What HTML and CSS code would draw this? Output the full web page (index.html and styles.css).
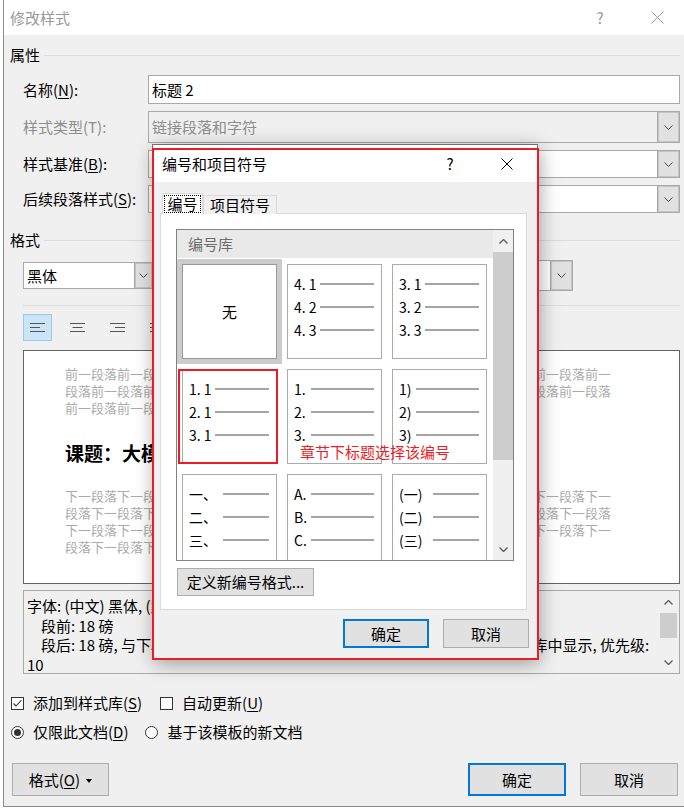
FILE: index.html
```html
<!DOCTYPE html>
<html lang="zh-CN">
<head>
    <meta charset="UTF-8">
    <title>修改样式</title>
    <link rel="stylesheet" href="styles.css">
</head>
<body>

<div class="window">
    <div class="titlebar">
        <span class="title">修改样式</span>
        <span class="tb-btn help">?</span>
        <span class="tb-btn close">
            <svg width="13" height="13" viewBox="0 0 13 13"><path d="M0.5 0.5 L12.5 12.5 M12.5 0.5 L0.5 12.5" stroke="#999" stroke-width="1" fill="none"/></svg>
        </span>
    </div>

    <div class="content">
        <div class="group-head">属性</div>
        <div class="props">
            <label>名称(<u>N</u>):</label>
            <div class="field">标题 2</div>

            <label class="disabled">样式类型(T):</label>
            <div class="field combo disabled">
                <span>链接段落和字符</span>
                <span class="drop"><svg width="9" height="5" viewBox="0 0 9 5"><path d="M0.5 0.5 L4.5 4.5 L8.5 0.5" stroke="#444" fill="none"/></svg></span>
            </div>

            <label>样式基准(<u>B</u>):</label>
            <div class="field combo">
                <span>↵ 正文</span>
                <span class="drop"><svg width="9" height="5" viewBox="0 0 9 5"><path d="M0.5 0.5 L4.5 4.5 L8.5 0.5" stroke="#444" fill="none"/></svg></span>
            </div>

            <label>后续段落样式(<u>S</u>):</label>
            <div class="field combo">
                <span>↵ 正文</span>
                <span class="drop"><svg width="9" height="5" viewBox="0 0 9 5"><path d="M0.5 0.5 L4.5 4.5 L8.5 0.5" stroke="#444" fill="none"/></svg></span>
            </div>
        </div>

        <div class="group-head second">格式</div>
        <div class="font-row">
            <div class="field combo font-combo">
                <span>黑体</span>
                <span class="drop"><svg width="9" height="5" viewBox="0 0 9 5"><path d="M0.5 0.5 L4.5 4.5 L8.5 0.5" stroke="#444" fill="none"/></svg></span>
            </div>
            <div class="field combo lang-combo">
                <span>中文</span>
                <span class="drop"><svg width="9" height="5" viewBox="0 0 9 5"><path d="M0.5 0.5 L4.5 4.5 L8.5 0.5" stroke="#444" fill="none"/></svg></span>
            </div>
        </div>
        <div class="sep"></div>

        <div class="align-row">
            <span class="align-btn on">
                <svg width="15" height="11" viewBox="0 0 15 11"><path d="M0 1.5 H15 M0 5.5 H10 M0 9.5 H15" stroke="#555" fill="none"/></svg>
            </span>
            <span class="align-btn">
                <svg width="15" height="11" viewBox="0 0 15 11"><path d="M0 1.5 H15 M2.5 5.5 H12.5 M0 9.5 H15" stroke="#555" fill="none"/></svg>
            </span>
            <span class="align-btn">
                <svg width="15" height="11" viewBox="0 0 15 11"><path d="M0 1.5 H15 M5 5.5 H15 M0 9.5 H15" stroke="#555" fill="none"/></svg>
            </span>
            <span class="align-btn">
                <svg width="15" height="11" viewBox="0 0 15 11"><path d="M0 1.5 H15 M0 5.5 H15 M0 9.5 H15" stroke="#555" fill="none"/></svg>
            </span>
        </div>

        <div class="preview">
            <div class="pv-line">前一段落前一段落前一段落前一段落前一段落前一段落前一段落前一段落前一段落前一段落前一</div>
            <div class="pv-line">段落前一段落前一段落前一段落前一段落前一段落前一段落前一段落前一段落前一段落前一段落</div>
            <div class="pv-line">前一段落前一段落前一段落前一段落前一段落</div>
            <div class="pv-head">课题：大模型应用研究</div>
            <div class="pv-line next">下一段落下一段落下一段落下一段落下一段落下一段落下一段落下一段落下一段落下一段落下一</div>
            <div class="pv-line">段落下一段落下一段落下一段落下一段落下一段落下一段落下一段落下一段落下一段落下一段落</div>
            <div class="pv-line">下一段落下一段落下一段落下一段落下一段落下一段落下一段落下一段落下一段落下一段落下一</div>
            <div class="pv-line">段落下一段落下一段落下一段落下一段落下一</div>
        </div>

        <div class="desc">
            <div class="desc-text">
                <div>字体: (中文) 黑体, (默认) +标题, 三号, 加粗, 段落间距</div>
                <div class="indent">段前: 18 磅</div>
                <div class="indent">段后: 18 磅, 与下段同页, <span class="fill">段中不分页, 2 级, 样式: 链接, 在样式</span>库中显示, 优先级:</div>
                <div>10</div>
            </div>
            <div class="scroll">
                <span class="sb-arrow"><svg width="9" height="5" viewBox="0 0 9 5"><path d="M0.5 4.5 L4.5 0.5 L8.5 4.5" stroke="#606060" stroke-width="1.4" fill="none"/></svg></span>
                <span class="sb-thumb small"></span>
                <span class="sb-track"></span>
                <span class="sb-arrow"><svg width="9" height="5" viewBox="0 0 9 5"><path d="M0.5 0.5 L4.5 4.5 L8.5 0.5" stroke="#606060" stroke-width="1.4" fill="none"/></svg></span>
            </div>
        </div>

        <div class="checks">
            <span class="opt"><span class="checkbox"><svg width="11" height="11" viewBox="0 0 11 11"><path d="M1.5 5.5 L4 8 L9.5 2" stroke="#333" stroke-width="1.1" fill="none"/></svg></span><span>添加到样式库(<u>S</u>)</span></span>
            <span class="opt"><span class="checkbox"></span><span>自动更新(<u>U</u>)</span></span>
        </div>
        <div class="checks radios">
            <span class="opt"><span class="radio on"></span><span>仅限此文档(<u>D</u>)</span></span>
            <span class="opt"><span class="radio"></span><span>基于该模板的新文档</span></span>
        </div>

        <div class="buttons">
            <button class="btn format-btn">格式(<u>O</u>) <span class="caret"></span></button>
            <button class="btn primary">确定</button>
            <button class="btn">取消</button>
        </div>
    </div>

    <!-- 编号和项目符号 dialog, opened on top -->
    <div class="numbering">
        <div class="nb-title">
            <span>编号和项目符号</span>
            <span class="tb-btn help">?</span>
            <span class="tb-btn close">
                <svg width="12" height="12" viewBox="0 0 12 12"><path d="M0.5 0.5 L11.5 11.5 M11.5 0.5 L0.5 11.5" stroke="#000" stroke-width="1" fill="none"/></svg>
            </span>
        </div>
        <div class="nb-body">
            <div class="tabs">
                <span class="tab on"><span class="focus">编号</span></span>
                <span class="tab">项目符号</span>
            </div>
            <div class="panel">
                <div class="library">
                    <div class="lib-main">
                        <div class="lib-head">编号库</div>
                        <div class="lib-grid">
                            <div class="cell sel none">无</div>
                            <div class="cell">
                                <div class="num-row"><span class="num">4. 1</span><span class="rule"></span></div>
                                <div class="num-row"><span class="num">4. 2</span><span class="rule"></span></div>
                                <div class="num-row"><span class="num">4. 3</span><span class="rule"></span></div>
                            </div>
                            <div class="cell">
                                <div class="num-row"><span class="num">3. 1</span><span class="rule"></span></div>
                                <div class="num-row"><span class="num">3. 2</span><span class="rule"></span></div>
                                <div class="num-row"><span class="num">3. 3</span><span class="rule"></span></div>
                            </div>

                            <div class="cell">
                                <div class="num-row"><span class="num">1. 1</span><span class="rule"></span></div>
                                <div class="num-row"><span class="num">2. 1</span><span class="rule"></span></div>
                                <div class="num-row"><span class="num">3. 1</span><span class="rule"></span></div>
                            </div>
                            <div class="cell">
                                <div class="num-row"><span class="num narrow">1.</span><span class="rule"></span></div>
                                <div class="num-row"><span class="num narrow">2.</span><span class="rule"></span></div>
                                <div class="num-row"><span class="num narrow">3.</span><span class="rule"></span></div>
                            </div>
                            <div class="cell">
                                <div class="num-row"><span class="num narrow">1)</span><span class="rule"></span></div>
                                <div class="num-row"><span class="num narrow">2)</span><span class="rule"></span></div>
                                <div class="num-row"><span class="num narrow">3)</span><span class="rule"></span></div>
                            </div>

                            <div class="cell">
                                <div class="num-row"><span class="num wide">一、</span><span class="rule"></span></div>
                                <div class="num-row"><span class="num wide">二、</span><span class="rule"></span></div>
                                <div class="num-row"><span class="num wide">三、</span><span class="rule"></span></div>
                            </div>
                            <div class="cell">
                                <div class="num-row"><span class="num narrow">A.</span><span class="rule"></span></div>
                                <div class="num-row"><span class="num narrow">B.</span><span class="rule"></span></div>
                                <div class="num-row"><span class="num narrow">C.</span><span class="rule"></span></div>
                            </div>
                            <div class="cell">
                                <div class="num-row"><span class="num wide">(一)</span><span class="rule"></span></div>
                                <div class="num-row"><span class="num wide">(二)</span><span class="rule"></span></div>
                                <div class="num-row"><span class="num wide">(三)</span><span class="rule"></span></div>
                            </div>
                        </div>
                    </div>
                    <div class="scroll lib-scroll">
                        <span class="sb-arrow"><svg width="9" height="5" viewBox="0 0 9 5"><path d="M0.5 4.5 L4.5 0.5 L8.5 4.5" stroke="#606060" stroke-width="1.4" fill="none"/></svg></span>
                        <span class="sb-thumb"></span>
                        <span class="sb-track"></span>
                        <span class="sb-arrow"><svg width="9" height="5" viewBox="0 0 9 5"><path d="M0.5 0.5 L4.5 4.5 L8.5 0.5" stroke="#606060" stroke-width="1.4" fill="none"/></svg></span>
                    </div>
                </div>
                <button class="btn define-btn">定义新编号格式...</button>
            </div>
            <div class="nb-buttons">
                <button class="btn primary">确定</button>
                <button class="btn">取消</button>
            </div>
        </div>
    </div>

    <!-- red annotations drawn on the screenshot -->
    <div class="mark mark-dialog"></div>
    <div class="mark mark-cell"></div>
    <div class="mark-text">章节下标题选择该编号</div>
</div>

</body>
</html>
```

FILE: styles.css
```css
* {
    box-sizing: border-box;
}
body {
    margin: 0;
    background: #ffffff;
    font-family: "Noto Sans CJK SC", "Noto Sans", sans-serif;
    font-size: 15px;
    line-height: 20px;
    color: #000;
}
u {
    text-decoration-thickness: 1px;
    text-underline-offset: 2px;
}

.window {
    position: relative;
    margin-left: 3px;
    width: 681px;
    height: 807px;
    border-left: 1px solid #8c8c8c;
    border-bottom: 1px solid #8c8c8c;
    background: #f0f0f0;
    overflow: hidden;
}

/* title bar */
.titlebar {
    display: flex;
    align-items: center;
    height: 35px;
    background: #fff;
}
.titlebar .title {
    padding-left: 6px;
    color: #999;
}
.tb-btn {
    display: flex;
    align-items: center;
    justify-content: center;
    width: 46px;
    height: 35px;
}
.titlebar .help {
    margin-left: auto;
    color: #999;
}
.titlebar .close {
    margin-left: 11px;
    margin-right: 4px;
}

/* main form */
.content {
    padding: 0 4px 0 6px;
}
.group-head {
    display: flex;
    align-items: center;
    height: 20px;
    margin-top: 10px;
}
.group-head::after {
    content: "";
    flex: 1;
    height: 1px;
    margin-left: 4px;
    background: #dcdcdc;
}
.group-head.second {
    margin-top: 17px;
}
.props {
    display: grid;
    grid-template-columns: 125px 1fr;
    grid-template-rows: 29px 32px 28px 28px;
    row-gap: 7px;
    margin: 10px 0 0 13px;
}
.props label {
    display: flex;
    align-items: center;
}
.props label.disabled {
    color: #8d8d8d;
}
.field {
    display: flex;
    align-items: center;
    padding-left: 3px;
    background: #fff;
    border: 1px solid #a9a9a9;
    white-space: nowrap;
    overflow: hidden;
}
.field.disabled {
    background: #f0f0f0;
    color: #8d8d8d;
}
.drop {
    display: flex;
    align-items: center;
    justify-content: center;
    align-self: stretch;
    width: 22px;
    margin-left: auto;
    background: #e1e1e1;
    border-left: 1px solid #a9a9a9;
    box-shadow: inset 0 0 0 1px #c4c4c4;
}

.font-row {
    display: flex;
    align-items: center;
    height: 31px;
    margin: 10px 0 0 13px;
}
.font-combo {
    width: 130px;
    height: 27px;
}
.font-combo .drop {
    width: 18px;
}
.lang-combo {
    width: 100px;
    height: 31px;
    margin-left: auto;
    margin-right: 107px;
}
.sep {
    height: 1px;
    margin: 14px 0 0 13px;
    background: #dcdcdc;
}

.align-row {
    display: flex;
    gap: 11px;
    margin: 8px 0 0 13px;
}
.align-btn {
    display: flex;
    align-items: center;
    justify-content: center;
    width: 29px;
    height: 27px;
    border: 1px solid transparent;
}
.align-btn.on {
    background: #cce4f7;
    border-color: #99c9ef;
}

.preview {
    height: 234px;
    margin: 9px 0 0 13px;
    padding: 14px 0 0 41px;
    background: #fff;
    border: 1px solid #646464;
    overflow: hidden;
}
.pv-line {
    font-size: 13px;
    line-height: 17px;
    color: #ababab;
    white-space: nowrap;
}
.pv-line.next {
    margin-top: 22px;
}
.pv-head {
    margin-top: 25px;
    font-size: 19px;
    line-height: 24px;
    font-weight: bold;
    white-space: nowrap;
}

.desc {
    display: flex;
    height: 84px;
    margin: 6px 0 0 13px;
    border: 1px solid #a9a9a9;
}
.desc-text {
    flex: 1;
    padding: 5px 0 0 3px;
    line-height: 19.5px;
    white-space: nowrap;
    overflow: hidden;
}
.desc-text .indent {
    padding-left: 14px;
}
/* middle of the long line sits behind the dialog; spread it so the tail lands where Word puts it */
.desc-text .fill {
    letter-spacing: 4px;
}

.scroll {
    display: flex;
    flex-direction: column;
    width: 21px;
    background: #f0f0f0;
}
.sb-arrow {
    display: flex;
    align-items: center;
    justify-content: center;
    height: 22px;
}
.sb-thumb {
    height: 208px;
    background: #cdcdcd;
}
.sb-thumb.small {
    height: 25px;
    margin: 0 2px;
}
.sb-track {
    flex: 1;
}

.checks {
    display: flex;
    align-items: center;
    gap: 18px;
    height: 18px;
    margin: 20px 0 0 1px;
}
.checks.radios {
    margin-top: 11px;
    gap: 17px;
}
.opt {
    display: flex;
    align-items: center;
    gap: 9px;
}
.checkbox {
    display: flex;
    align-items: center;
    justify-content: center;
    width: 13px;
    height: 13px;
    background: #fff;
    border: 1px solid #333;
}
.radio {
    position: relative;
    width: 13px;
    height: 13px;
    background: #fff;
    border: 1px solid #333;
    border-radius: 50%;
}
.radio.on::after {
    content: "";
    position: absolute;
    left: 2px;
    top: 2px;
    width: 7px;
    height: 7px;
    border-radius: 50%;
    background: #333;
}

.buttons {
    display: flex;
    gap: 14px;
    margin: 22px 2px 0 2px;
}
.btn {
    height: 33px;
    padding: 0;
    font: inherit;
    color: #000;
    background: #e1e1e1;
    border: 1px solid #adadad;
}
.btn.primary {
    border: 2px solid #0078d7;
}
.format-btn {
    width: 97px;
    margin-right: auto;
}
.buttons .btn:not(.format-btn) {
    width: 98px;
}
.caret {
    display: inline-block;
    margin-left: 3px;
    vertical-align: middle;
    border-left: 3px solid transparent;
    border-right: 3px solid transparent;
    border-top: 4px solid #000;
}

/* numbering dialog */
.numbering {
    position: absolute;
    left: 148px;
    top: 144px;
    width: 386px;
    height: 516px;
    background: #f0f0f0;
    border: 1px solid #6e6e6e;
    box-shadow: 2px 4px 18px rgba(0, 0, 0, 0.35);
}
.nb-title {
    display: flex;
    align-items: center;
    height: 37px;
    padding-left: 9px;
    background: #fff;
}
.nb-title .tb-btn {
    height: 37px;
}
.nb-title .help {
    margin-left: auto;
}
.nb-title .close {
    margin-left: 11px;
    margin-right: 7px;
}
.nb-body {
    padding: 11px 0 0 7px;
}
.tabs {
    position: relative;
    z-index: 1;
    display: flex;
    align-items: flex-end;
    height: 21px;
    margin: 0 0 -1px 2px;
}
.tab {
    display: flex;
    align-items: center;
    justify-content: center;
    width: 74px;
    height: 19px;
    background: #f0f0f0;
    border: 1px solid #d9d9d9;
    border-bottom: none;
}
.tab.on {
    width: 41px;
    height: 21px;
    padding: 1px;
    background: #fff;
}
.tab .focus {
    display: flex;
    align-items: center;
    justify-content: center;
    width: 100%;
    height: 100%;
    border: 1px dotted #000;
}
.panel {
    width: 367px;
    height: 397px;
    padding: 15px 0 0 15px;
    background: #fff;
    border: 1px solid #d9d9d9;
}
.library {
    display: flex;
    width: 338px;
    height: 332px;
    border: 1px solid #828282;
}
.lib-main {
    width: 316px;
    background: #fff;
}
.lib-head {
    display: flex;
    align-items: center;
    height: 28px;
    padding-left: 11px;
    color: #6d6d6d;
    background: #e9e9e9;
}
.lib-grid {
    display: grid;
    grid-template-columns: repeat(3, 95px);
    grid-auto-rows: 95px;
    gap: 10px;
    height: 302px;
    padding: 6px 0 0 5px;
    overflow: hidden;
}
.lib-scroll {
    width: 20px;
}
.cell {
    padding: 7px 7px 0 6px;
    background: #fff;
    border: 1px solid #ababab;
}
.cell.sel {
    border-color: #9a9a9a;
    box-shadow: 0 0 0 5px #cccccc;
}
.cell.none {
    display: flex;
    align-items: center;
    justify-content: center;
    padding: 0;
}
.num-row {
    display: flex;
    align-items: center;
    height: 23px;
    font-size: 14px;
}
.num {
    flex: none;
    width: 26px;
    white-space: nowrap;
}
.num.narrow {
    width: 17px;
}
.num.wide {
    width: 34px;
}
.rule {
    flex: 1;
    height: 2px;
    background: #a5a5a5;
}
.define-btn {
    width: 137px;
    height: 28px;
    margin: 7px 0 0 1px;
}
.nb-buttons {
    display: flex;
    justify-content: flex-end;
    gap: 14px;
    margin-top: 9px;
    padding-right: 8px;
}
.nb-buttons .btn {
    width: 86px;
    height: 29px;
}

/* red annotations */
.mark {
    position: absolute;
    border: 2px solid #ed1c24;
}
.mark-dialog {
    left: 148px;
    top: 148px;
    width: 387px;
    height: 512px;
}
.mark-cell {
    left: 174px;
    top: 369px;
    width: 100px;
    height: 95px;
}
.mark-text {
    position: absolute;
    left: 296px;
    top: 442px;
    color: #ed1c24;
}
```
